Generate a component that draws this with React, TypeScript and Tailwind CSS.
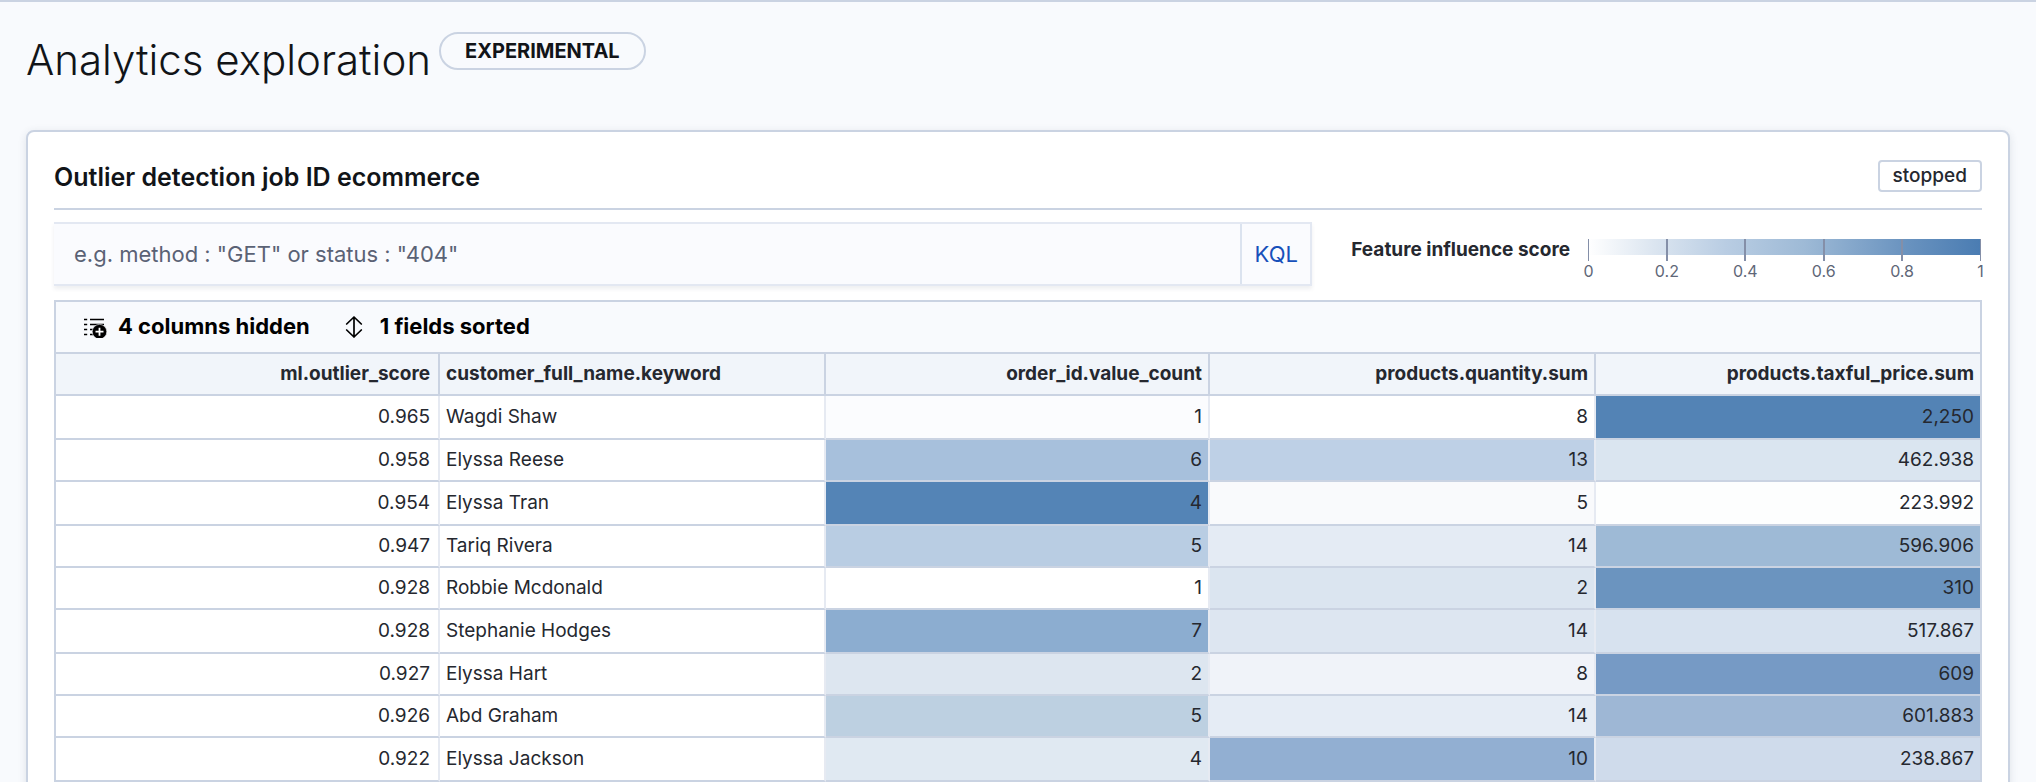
import React from "react";

type Align = "left" | "right";

const columns: { id: string; align: Align; width: string }[] = [
  { id: "ml.outlier_score", align: "right", width: "w-[384px]" },
  { id: "customer_full_name.keyword", align: "left", width: "w-[386px]" },
  { id: "order_id.value_count", align: "right", width: "w-[384px]" },
  { id: "products.quantity.sum", align: "right", width: "w-[386px]" },
  { id: "products.taxful_price.sum", align: "right", width: "w-[384px]" },
];

// Each cell holds its text and, for scored fields, its influence colour.
const rows: [string, string?][][] = [
  [["0.965"], ["Wagdi Shaw"], ["1", "#fbfcfe"], ["8", "#ffffff"], ["2,250", "#5383b5"]],
  [["0.958"], ["Elyssa Reese"], ["6", "#a7c0dc"], ["13", "#bed0e6"], ["462.938", "#dae5f0"]],
  [["0.954"], ["Elyssa Tran"], ["4", "#5484b6"], ["5", "#f9fafc"], ["223.992", "#fdfefe"]],
  [["0.947"], ["Tariq Rivera"], ["5", "#b9cde3"], ["14", "#e4ebf4"], ["596.906", "#9ebad6"]],
  [["0.928"], ["Robbie Mcdonald"], ["1", "#ffffff"], ["2", "#dbe5f0"], ["310", "#6b94bf"]],
  [["0.928"], ["Stephanie Hodges"], ["7", "#8cadd0"], ["14", "#dde6f1"], ["517.867", "#d7e2ef"]],
  [["0.927"], ["Elyssa Hart"], ["2", "#dde6f0"], ["8", "#f0f3f9"], ["609", "#769ac5"]],
  [["0.926"], ["Abd Graham"], ["5", "#bdd0e1"], ["14", "#e5ecf5"], ["601.883", "#9eb7d5"]],
  [["0.922"], ["Elyssa Jackson"], ["4", "#e0e9f2"], ["10", "#92afd2"], ["238.867", "#cfdbeb"]],
];

const ticks = ["0", "0.2", "0.4", "0.6", "0.8", "1"];

function ColumnsIcon() {
  return (
    <svg width="24" height="24" viewBox="0 0 24 24" aria-hidden="true">
      <path
        d="M0 5.5h3.200M6 5.500h14M0 10.500h3.200M6 10.500h14M0 15.500h3.200M6 15.500h5M0 20.500h3.200M6 20.500h3"
        stroke="#000"
        strokeWidth="1.6"
        fill="none"
      />
      <circle cx="15.5" cy="17.7" r="7.300" fill="#000" stroke="#f8fafd" strokeWidth="0.6" />
      <path d="M15.500 13.700v8M11.500 17.700h8" stroke="#fff" strokeWidth="1.8" />
    </svg>
  );
}

function SortIcon() {
  return (
    <svg width="24" height="24" viewBox="0 0 24 24" aria-hidden="true">
      <path
        d="M12 3v20M4.700 10L12 3l7.300 7M4.700 16l7.300 7 7.300-7"
        stroke="#000"
        strokeWidth="1.7"
        strokeLinecap="round"
        strokeLinejoin="round"
        fill="none"
      />
    </svg>
  );
}

function InfluenceLegend() {
  return (
    <div className="mr-px flex items-start gap-[18px]">
      <span className="text-[19px] leading-[22px] font-bold">Feature influence score</span>
      <div className="w-[393px]">
        <div className="flex h-[22px] items-start justify-between bg-[linear-gradient(90deg,#ffffff,#dbe5f0_17%,#b9cde3_35%,#9ebad6_55%,#6b94c0_80%,#4a7cb2)] bg-[length:100%_16px] bg-no-repeat">
          {ticks.map((t) => (
            <span
              key={t}
              className="h-full w-0.5 bg-[#848fa8] first:w-px last:w-px"
            />
          ))}
        </div>
        <div className="flex justify-between">
          {ticks.map((t) => (
            <span key={t} className="flex w-px justify-center text-base leading-5 text-[#5f6778]">
              {t}
            </span>
          ))}
        </div>
      </div>
    </div>
  );
}

export default function App() {
  return (
    <div className="h-screen overflow-hidden border-t-2 border-[#cad3e2] bg-[#f8fafd] px-[26px] font-['Inter',sans-serif] text-[#25282f]">
      <header className="flex items-start gap-2 pt-[30px]">
        <h1 className="text-[42px] leading-[56px] font-light text-[#111418]">Analytics exploration</h1>
        <span className="flex h-[38px] items-center rounded-full border-2 border-[#cad3e2] px-6 text-[20px] font-bold text-[#111418]">
          EXPERIMENTAL
        </span>
      </header>

      <main className="mt-[42px] min-h-screen rounded-lg border-2 border-[#cad3e2] bg-white px-[26px] pt-[26px] shadow-[0_2px_8px_rgba(43,57,79,0.12)]">
        <div className="flex h-[50px] items-start justify-between">
          <h2 className="text-[25px] leading-[38px] font-semibold text-[#111418]">
            Outlier detection job ID ecommerce
          </h2>
          <span className="mt-0.5 flex h-8 items-center rounded border-2 border-[#cad3e2] px-[13px] text-[19px] font-medium">
            stopped
          </span>
        </div>
        <hr className="border-t-2 border-[#cad3e2]" />

        <div className="mt-3 flex items-start">
          <div className="flex h-16 flex-1 border-2 border-l-0 border-[#e3e8f2] bg-[#fafbfe] shadow-[0_3px_4px_rgba(43,57,79,0.08)]">
            <input
              type="text"
              aria-label="Search"
              placeholder='e.g. method : "GET" or status : "404"'
              className="min-w-0 flex-1 bg-transparent px-5 text-[22px] outline-none placeholder:text-[#5a6275]"
            />
            <button type="button" className="w-[70px] border-l-2 border-[#dbe3ef] text-[22px] text-[#1750ba]">
              KQL
            </button>
          </div>
          <div className="ml-[39px] pt-[17px]">
            <InfluenceLegend />
          </div>
        </div>

        <div className="mt-[14px] border-x-2 border-t-2 border-[#cad3e2]">
          <div className="flex h-[50px] items-center gap-8 bg-[#f8fafd] pb-0.5 pl-7 text-[22px] font-bold text-black">
            <button type="button" className="flex items-center gap-2.5">
              <ColumnsIcon />4 columns hidden
            </button>
            <button type="button" className="flex items-center gap-[14px]">
              <SortIcon />1 fields sorted
            </button>
          </div>
          <table className="w-full table-fixed border-separate border-spacing-0 border-t-2 border-[#cad3e2]">
            <thead>
              <tr className="h-[42px] bg-[#f1f5fa]">
                {columns.map((c) => (
                  <th
                    key={c.id}
                    scope="col"
                    className={`border-r-2 border-b-2 border-[#cad3e2] px-1.5 py-0 text-[19px] leading-6 font-bold first:pr-2 last:border-r-0 ${c.width} ${c.align === "left" ? "text-left" : "text-right"}`}
                  >
                    {c.id}
                  </th>
                ))}
              </tr>
            </thead>
            <tbody>
              {rows.map((cells, r) => (
                <tr key={r} className={r === 0 || r % 3 === 2 ? "h-11" : "h-[42px]"}>
                  {cells.map(([text, fill], i) => (
                    <td
                      key={i}
                      style={{ backgroundColor: fill }}
                      className={`border-r-2 border-b-2 border-r-[#e6eaf2] border-b-[#cad3e2] px-1.5 pt-0 pb-px text-[19px] leading-6 first:pr-2 last:border-r-0 ${columns[i].align === "left" ? "text-left" : "text-right"}`}
                    >
                      {text}
                    </td>
                  ))}
                </tr>
              ))}
            </tbody>
          </table>
        </div>
      </main>
    </div>
  );
}
